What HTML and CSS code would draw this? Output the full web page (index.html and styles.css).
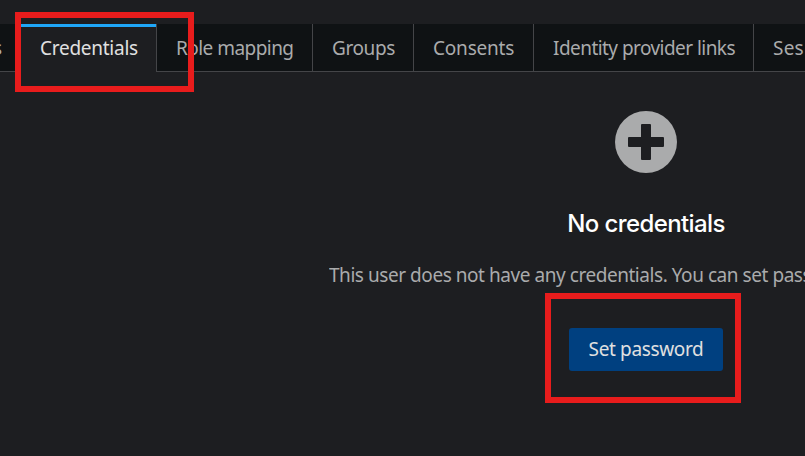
FILE: index.html
```html
<!DOCTYPE html>
<html lang="en">
<head>
<meta charset="utf-8">
<title>User credentials</title>
<link rel="stylesheet" href="styles.css">
</head>
<body>
<nav class="tabs">
  <a class="tab tab-previous"><span>s</span></a>
  <a class="tab tab-active"><span class="t-credentials">Credentials</span></a>
  <a class="tab tab-roles"><span class="t-roles">Role mapping</span></a>
  <a class="tab tab-groups"><span class="t-groups">Groups</span></a>
  <a class="tab tab-consents"><span class="t-consents">Consents</span></a>
  <a class="tab tab-links"><span class="t-links">Identity provider links</span></a>
  <a class="tab tab-sessions"><span class="t-sessions">Ses</span></a>
</nav>
<main class="empty-state">
  <svg class="icon" viewBox="0 0 62 62" aria-hidden="true">
    <circle cx="31" cy="31" r="31" fill="#aaabac"/>
    <path d="M27 13h8q1 0 1 1v12h12q1 0 1 1v8q0 1-1 1H36v12q0 1-1 1h-8q-1 0-1-1V36H14q-1 0-1-1v-8q0-1 1-1h12V14q0-1 1-1z" fill="#1d1e21"/>
  </svg>
  <h1 class="title">No credentials</h1>
  <p class="description">This user does not have any credentials. You can set pass</p>
  <button class="primary">Set password</button>
</main>
<div class="highlight highlight-tab"></div>
<div class="highlight highlight-button"></div>
</body>
</html>
```
FILE: styles.css
```css
* { box-sizing: border-box; }
body {
  margin: 0;
  width: 805px;
  height: 456px;
  padding-top: 24px;
  overflow: hidden;
  background: #1d1e21;
  color: #aaabac;
  font: 400 19px/28px "Noto Sans", sans-serif;
  position: relative;
}
.tabs { display: flex; height: 48px; overflow: hidden; }
.tab {
  flex: none;
  padding: 10px 0 0 19px;
  background: #0f1214;
  border-right: 1px solid #444548;
  border-bottom: 1px solid #444548;
  white-space: nowrap;
}
.tab-previous { width: 21px; padding-left: 0; border-right: 0; }
.tab-previous span { margin-left: -7px; }
.tab-active {
  width: 136px;
  background: linear-gradient(#1fa7f8 3px, #1d1e21 3px);
  border-bottom: 0;
  color: #e0e0e0;
}
.tab-roles { width: 156px; }
.tab-groups { width: 101px; }
.tab-consents { width: 120px; }
.tab-links { width: 220px; }
.tab-sessions { flex: 1; border-right: 0; }
.t-credentials { letter-spacing: -0.26px; }
.t-roles { letter-spacing: -0.54px; }
.t-groups { letter-spacing: -0.4px; }
.t-consents { letter-spacing: -0.2px; }
.t-links { letter-spacing: -0.55px; }
.t-sessions { letter-spacing: 0.2px; }
.empty-state {
  width: 634px;
  margin-left: 329px;
  padding-top: 39px;
  display: flex;
  flex-direction: column;
  align-items: center;
}
.icon { width: 62px; height: 62px; display: block; }
.title {
  margin: 35px 0 0;
  font: 500 24px/32px Inter, "Noto Sans", sans-serif;
  letter-spacing: -0.6px;
  color: #fff;
  white-space: nowrap;
}
.description {
  width: 476px;
  margin: 21px 0 0;
  align-self: flex-start;
  overflow: hidden;
  letter-spacing: -0.45px;
  white-space: nowrap;
}
.primary {
  width: 154px;
  height: 43px;
  margin-top: 39px;
  padding: 0 0 1px;
  border: 0;
  border-radius: 3px;
  background: #004080;
  color: #e0e0e0;
  font: 400 19px/28px "Noto Sans", sans-serif;
  letter-spacing: -0.35px;
  white-space: nowrap;
}
.highlight { position: absolute; border: 6px solid #e81c1c; }
.highlight-tab { left: 15px; top: 12px; width: 179px; height: 80px; }
.highlight-button { left: 545px; top: 293px; width: 196px; height: 110px; }
```
